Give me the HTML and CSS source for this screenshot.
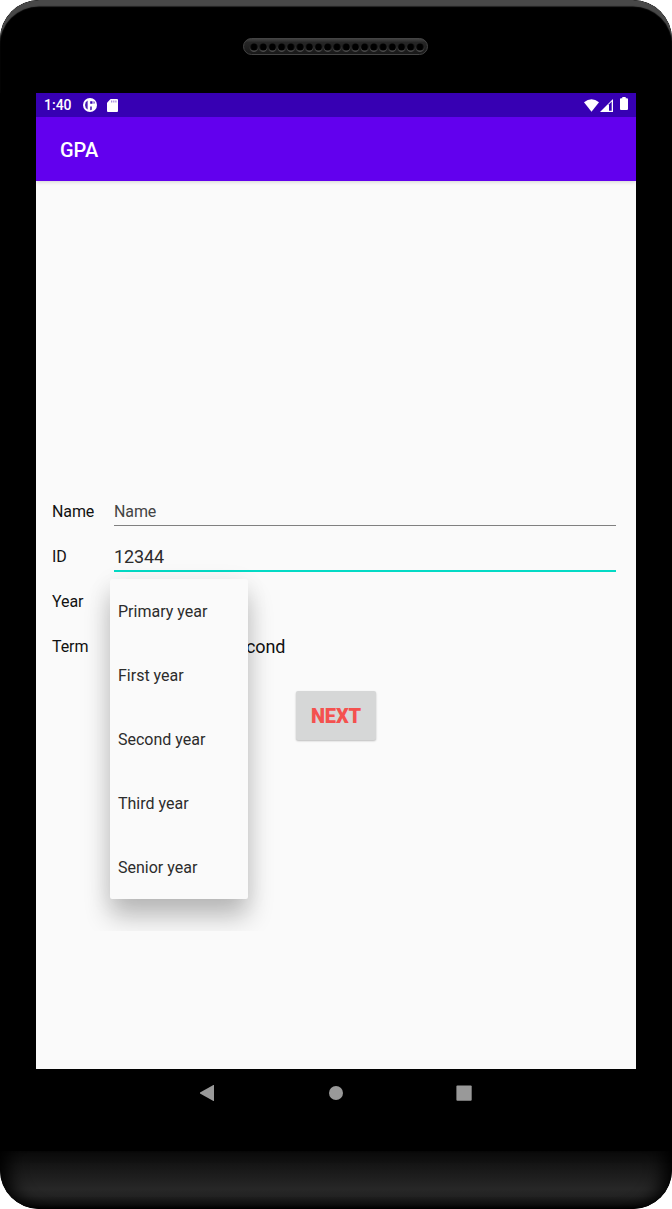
FILE: index.html
```html
<!DOCTYPE html>
<html lang="en">
<head>
<meta charset="utf-8">
<title>GPA</title>
<link rel="stylesheet" href="styles.css">
</head>
<body>
<div class="device">
  <header class="bezel-top">
    <svg class="speaker" width="186" height="18" viewBox="0 0 186 18">
      <defs>
        <linearGradient id="grille" x1="0" y1="0" x2="0" y2="1">
          <stop offset="0" stop-color="#444"/>
          <stop offset=".25" stop-color="#262626"/>
          <stop offset="1" stop-color="#181818"/>
        </linearGradient>
        <pattern id="holes" x="6.4" y="4" width="9.22" height="12" patternUnits="userSpaceOnUse">
          <circle cx="4.6" cy="5.9" r="4" fill="#4a4a4a"/>
          <circle cx="4.6" cy="5" r="3.6" fill="#000"/>
        </pattern>
      </defs>
      <rect x=".5" y=".5" width="184" height="16" rx="8" fill="url(#grille)" stroke="#444"/>
      <rect x="6.4" y="4" width="175.2" height="12" fill="url(#holes)"/>
    </svg>
  </header>
  <main class="screen">
    <div class="status-bar">
      <span class="clock">1:40</span>
      <svg class="icon-app" width="14" height="14" viewBox="0 0 14 14">
        <circle cx="7" cy="7" r="7" fill="#fff"/>
        <path d="M4.6 2.6v8.8Q2 10 2 7t2.6-4.4z" fill="#4a1cb5"/>
        <path d="M7.2 3.2h2.3v2.5H7.2z" fill="#3700b3"/>
        <path d="M10.3 3.2h1l.8 1.3-.6 1.3h-1.2z" fill="#8c6cd2"/>
        <path d="M7.2 8.4h1.6v3.4l-1.6.4z" fill="#4a1cb5"/>
      </svg>
      <svg class="icon-card" width="11" height="13" viewBox="0 0 11 13">
        <path d="M3.6 0H10a1 1 0 0 1 1 1v11a1 1 0 0 1-1 1H1a1 1 0 0 1-1-1V3.7z" fill="#fff"/>
        <path d="M4 1.5h1.3v2H4zM6.2 1.5h1.2v2H6.2zM8.3 1.5h1.2v2H8.3z" fill="#a58adb"/>
      </svg>
      <span class="spacer"></span>
      <svg class="icon-wifi" width="15" height="13" viewBox="0 0 15 13">
        <path d="M0 3.3Q7.5-3 15 3.3L7.5 12.7z" fill="#fff"/>
      </svg>
      <svg class="icon-signal" width="13" height="13" viewBox="0 0 13 13">
        <path d="M0 13 13 0v13z" fill="#fff"/>
        <path d="M9 5.2 11.7 2.6v9.2H9z" fill="#3700b3"/>
      </svg>
      <svg class="icon-battery" width="8" height="13" viewBox="0 0 8 13">
        <path d="M2.3 0h3.4v1.2H7a1 1 0 0 1 1 1V12a1 1 0 0 1-1 1H1a1 1 0 0 1-1-1V2.2a1 1 0 0 1 1-1h1.3z" fill="#fff"/>
      </svg>
    </div>
    <div class="app-bar">GPA</div>
    <form class="form">
      <div class="row"><span class="label">Name</span><span class="field hint">Name</span></div>
      <div class="row"><span class="label">ID</span><span class="field active">12344</span></div>
      <div class="row">
        <span class="label">Year</span>
        <div class="menu">
          <div class="item">Primary year</div>
          <div class="item">First year</div>
          <div class="item">Second year</div>
          <div class="item">Third year</div>
          <div class="item">Senior year</div>
        </div>
      </div>
      <div class="row"><span class="label">Term</span><span class="option">Second</span></div>
      <button class="next" type="button">NEXT</button>
    </form>
  </main>
  <nav class="nav-bar">
    <svg width="16" height="16" viewBox="0 0 16 16"><path d="M14 0v16h-.6L0 8.6v-1L13.4 0z" fill="#999"/></svg>
    <svg width="16" height="16" viewBox="0 0 16 16"><circle cx="8" cy="8" r="7" fill="#999"/></svg>
    <svg width="16" height="16" viewBox="0 0 16 16"><rect x=".4" y=".4" width="15.3" height="15.3" rx="1" fill="#999"/></svg>
  </nav>
  <footer class="chin"></footer>
</div>
</body>
</html>
```

FILE: styles.css
```css
body {
  margin: 0;
  background: #fff;
  font-family: Roboto, sans-serif;
}

.device {
  width: 672px;
  height: 1209px;
  display: flex;
  flex-direction: column;
  overflow: hidden;
  background: #000;
  border-radius: 39px;
}

.bezel-top {
  box-sizing: border-box;
  height: 93px;
  flex: none;
  padding: 38px 0 0 243px;
  border-radius: 39px 39px 0 0;
  background: #000;
  box-shadow: inset 0 7px 1px -0.5px #484848;
}

.speaker {
  display: block;
}

.screen {
  width: 600px;
  height: 976px;
  flex: none;
  margin-left: 36px;
  background: #fafafa;
}

.status-bar {
  box-sizing: border-box;
  height: 24px;
  display: flex;
  align-items: center;
  padding: 0 8px;
  background: #3700b3;
  color: #fff;
}

.clock {
  width: 39px;
  font-size: 14px;
  font-weight: 500;
  line-height: 24px;
}

.icon-card {
  margin-left: 9.5px;
}

.spacer {
  flex: 1;
}

.icon-signal {
  margin-left: 1px;
}

.icon-battery {
  margin: -3px 0 0 7px;
}

.app-bar {
  box-sizing: border-box;
  height: 64px;
  padding-left: 24px;
  background: #6200ee;
  color: #fff;
  font-size: 20px;
  font-weight: 500;
  line-height: 66px;
  box-shadow: 0 1px 4px rgba(0, 0, 0, 0.16);
  clip-path: inset(0 0 -6px 0);
}

.form {
  display: flex;
  flex-direction: column;
  padding: 308px 20px 0 16px;
}

.row {
  position: relative;
  height: 45px;
  display: flex;
  align-items: flex-start;
  line-height: 45px;
}

.label {
  width: 62px;
  flex: none;
  color: #111;
  font-size: 16px;
  letter-spacing: -0.1px;
}

.field {
  box-sizing: border-box;
  height: 37px;
  flex: 1;
  border-bottom: 1px solid #808080;
  color: #2c2c2c;
  font-size: 18px;
  letter-spacing: -0.1px;
}

.hint {
  color: #444;
  font-size: 16px;
}

.active {
  height: 38px;
  border-bottom: 2px solid #03dac5;
}

.option {
  margin-left: 112px;
  color: #111;
  font-size: 18px;
  letter-spacing: -0.1px;
}

.menu {
  position: absolute;
  z-index: 1;
  top: 0;
  left: 58px;
  width: 138px;
  height: 320px;
  border-radius: 2px;
  background: #fafafa;
  box-shadow: 0 18px 26px rgba(0, 0, 0, 0.24), -1px 4px 24px rgba(0, 0, 0, 0.07);
  clip-path: inset(-32px);
}

.item {
  height: 64px;
  padding-left: 8px;
  color: #2c2c2c;
  font-size: 16px;
  line-height: 65px;
}

.next {
  width: 80px;
  height: 49px;
  margin: 22px 0 0 244px;
  padding: 1px 0 0;
  border: 0;
  border-radius: 2px;
  background: #d6d7d7;
  color: #f4514e;
  font: 900 20px Roboto, sans-serif;
  letter-spacing: -0.1px;
  box-shadow: 0 1px 2px rgba(0, 0, 0, 0.25);
}

.nav-bar {
  box-sizing: border-box;
  height: 82px;
  flex: none;
  display: flex;
  justify-content: center;
  gap: 112px;
  padding-top: 16px;
}

.chin {
  flex: 1;
  border-radius: 0 0 39px 39px;
  background: linear-gradient(#0b0b0b, #272727 66%, #222 78%, #111 92%, #000);
  box-shadow: inset 18px 0 18px -10px #000, inset -18px 0 18px -10px #000;
}
```
